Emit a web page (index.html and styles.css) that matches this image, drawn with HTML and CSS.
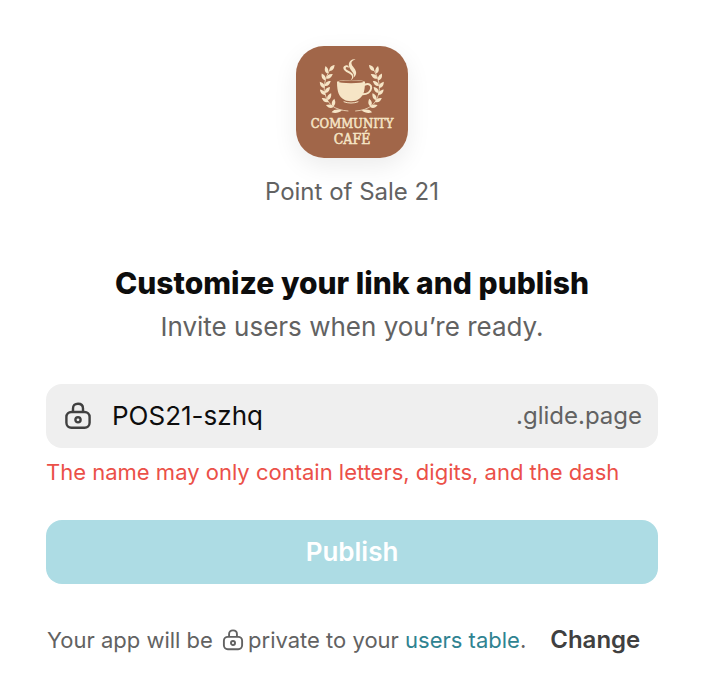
FILE: index.html
```html
<!DOCTYPE html>
<html lang="en">
<head>
<meta charset="utf-8">
<meta name="viewport" content="width=device-width, initial-scale=1">
<title>Publish app</title>
<link rel="stylesheet" href="styles.css">
</head>
<body>
<svg class="defs" aria-hidden="true">
  <symbol id="lock" viewBox="0 0 28 28">
    <g fill="none" stroke="currentColor" stroke-width="2.4">
      <rect x="2.4" y="10" width="23.200" height="15.800" rx="5"/>
      <path d="M9 10V6.500C9 3.400 10.800 1.800 14 1.800S19 3.400 19 6.500V10"/>
      <circle cx="14" cy="17.800" r="2.600"/>
    </g>
  </symbol>
</svg>
<main class="publish">
  <header class="app">
    <svg class="app-logo" viewBox="0 0 112 112" role="img" aria-label="Community Café">
      <defs>
        <path id="leaf" d="M0 0C-3.200-.8-4.200-3.400-3.400-7C-.4-5.200 1.200-3 0 0Z"/>
        <g id="branch">
          <path class="stem" d="M35 22C28 33 26.500 43 30 51C32.500 58 38 64 52 65"/>
          <use href="#leaf" transform="translate(33.600 25) rotate(66)"/>
          <use href="#leaf" transform="translate(31.500 27.500) rotate(12)"/>
          <use href="#leaf" transform="translate(30.300 32.500) rotate(82)"/>
          <use href="#leaf" transform="translate(29.400 34.500) rotate(-2)"/>
          <use href="#leaf" transform="translate(28.800 40) rotate(76)"/>
          <use href="#leaf" transform="translate(28.600 42) rotate(-12)"/>
          <use href="#leaf" transform="translate(29 47) rotate(66)"/>
          <use href="#leaf" transform="translate(29.500 49) rotate(-20)"/>
          <use href="#leaf" transform="translate(31.500 54) rotate(54)"/>
          <use href="#leaf" transform="translate(32.500 56) rotate(-34)"/>
          <use href="#leaf" transform="translate(37 60.500) rotate(36)"/>
          <use href="#leaf" transform="translate(37.500 61) rotate(-50)"/>
          <path d="M35.500 66.200C38 63.300 42 63 46 64.500C43 66.800 39 67.600 35.500 66.200Z"/>
        </g>
      </defs>
      <rect class="logo-bg" width="112" height="112"/>
      <g class="logo-art">
        <use href="#branch"/>
        <use href="#branch" transform="translate(111.600 0) scale(-1 1)"/>
        <path d="M41 36C41 47 43.500 51 48 53.500C50 55.800 60 55.800 62 53.500C66.500 51 69 47 69 36C69 33.300 41 33.300 41 36Z"/>
        <ellipse class="coffee" cx="55" cy="35.800" rx="12.600" ry="1.500"/>
        <path class="handle" d="M68.500 38.800C73 37 75.500 38.800 75.200 42C74.800 46 71 48.300 66.500 48.300"/>
        <path class="saucer" d="M48 55.800C52 57.500 58 57.500 62 55.800"/>
        <path d="M54.500 34.500C57.500 31 56 28.800 52.300 27C46.500 24.200 46 20.500 49.500 19.500C52 18.900 53.500 20.500 52.300 22C51.700 20.600 50 20.500 49.700 22C49.400 23.700 53 24.600 55.500 26.800C58.700 29.500 57.800 32.800 54.500 34.500Z"/>
        <path d="M57.700 31.500C60 27.500 52 23 52.800 18C53.400 14.800 56.500 12.700 59.500 13.500C54.800 14.700 54.600 17.500 57 20.500C60 24.300 62 28 57.700 31.500Z"/>
        <text class="logo-top" x="56" y="82">COMMUNITY</text>
        <text class="logo-bottom" x="56" y="98">CAFÉ</text>
      </g>
    </svg>
    <p class="app-name">Point of Sale 21</p>
  </header>

  <h1 class="title">Customize your link and publish</h1>
  <p class="subtitle">Invite users when you’re ready.</p>

  <form class="form">
    <label class="field">
      <svg class="field-icon" role="img" aria-label="App link"><use href="#lock"/></svg>
      <input class="field-input" type="text" value="POS21-szhq" spellcheck="false" aria-describedby="link-error">
      <span class="field-suffix">.glide.page</span>
    </label>
    <p class="error" id="link-error">The name may only contain letters, digits, and the dash</p>
    <button class="submit" type="submit" disabled>Publish</button>
  </form>

  <footer class="privacy">
    <p class="privacy-text">Your app will be <svg class="privacy-icon" aria-hidden="true"><use href="#lock"/></svg>private to your <a class="link" href="#users">users table</a>.</p>
    <button class="change" type="button">Change</button>
  </footer>
</main>
</body>
</html>
```

FILE: styles.css
```css
* {
  box-sizing: border-box;
}

body {
  margin: 0;
  background: #fff;
  color: #626262;
  font-family: Inter, "Liberation Sans", sans-serif;
  font-size: 22px;
}

p,
h1 {
  margin: 0;
}

.defs {
  position: absolute;
  width: 0;
  height: 0;
}

.publish {
  padding: 46px 56px 40px 46px;
}

.app {
  display: flex;
  flex-direction: column;
  align-items: center;
  gap: 18px;
}

.app-logo {
  width: 112px;
  height: 112px;
  border-radius: 28px;
  box-shadow: 0 8px 24px rgb(0 0 0 / 8%);
}

.logo-bg {
  fill: #a16649;
}

.logo-art {
  fill: #f6e5c6;
}

.stem,
.handle,
.saucer {
  fill: none;
  stroke: #f6e5c6;
  stroke-linecap: round;
}

.stem {
  stroke-width: 0.8;
}

.handle {
  stroke-width: 2;
}

.saucer {
  stroke-width: 1;
}

.coffee {
  fill: #a16649;
}

.logo-top,
.logo-bottom {
  font-family: "DejaVu Serif Condensed", "DejaVu Serif", serif;
  stroke: #f6e5c6;
  stroke-width: 0.5;
  text-anchor: middle;
}

.logo-top {
  font-size: 13px;
}

.logo-bottom {
  font-size: 14px;
}

.app-name {
  font-size: 24px;
  line-height: 32px;
}

.title {
  margin-top: 55px;
  color: #0d0d0d;
  font-size: 30px;
  font-weight: 800;
  line-height: 40px;
  text-align: center;
}

.subtitle {
  margin-top: 4px;
  font-size: 26px;
  line-height: 40px;
  text-align: center;
}

.form {
  margin-top: 37px;
}

.field {
  display: flex;
  align-items: center;
  height: 64px;
  padding: 0 16px 0 18px;
  border-radius: 16px;
  background: #efefef;
}

.field-icon {
  flex: none;
  width: 28px;
  height: 28px;
  color: #404040;
}

.field-input {
  flex: 1;
  min-width: 0;
  margin-left: 20px;
  padding: 0 0 2px;
  border: 0;
  outline: 0;
  background: transparent;
  color: #0d0d0d;
  font: inherit;
  font-size: 26px;
}

.field-suffix {
  padding-bottom: 2px;
  font-size: 24px;
}

.error {
  margin-top: 8px;
  color: #eb5048;
  font-size: 22px;
  line-height: 32px;
}

.submit {
  display: block;
  width: 100%;
  height: 64px;
  margin-top: 32px;
  padding: 0 0 2px;
  border: 0;
  border-radius: 16px;
  background: #addce4;
  color: #fff;
  font: inherit;
  font-size: 26px;
  font-weight: 600;
}

.privacy {
  display: flex;
  align-items: center;
  gap: 24px;
  margin-top: 40px;
  padding-left: 1px;
}

.privacy-text {
  line-height: 32px;
  white-space: nowrap;
}

.privacy-icon {
  width: 22px;
  height: 22px;
  margin: 0 4px 0 3px;
  vertical-align: -3px;
}

.link {
  color: #2f8391;
  text-decoration: none;
}

.change {
  padding: 0 0 2px;
  border: 0;
  background: none;
  color: #404040;
  font: inherit;
  font-size: 24px;
  font-weight: 600;
}
```
